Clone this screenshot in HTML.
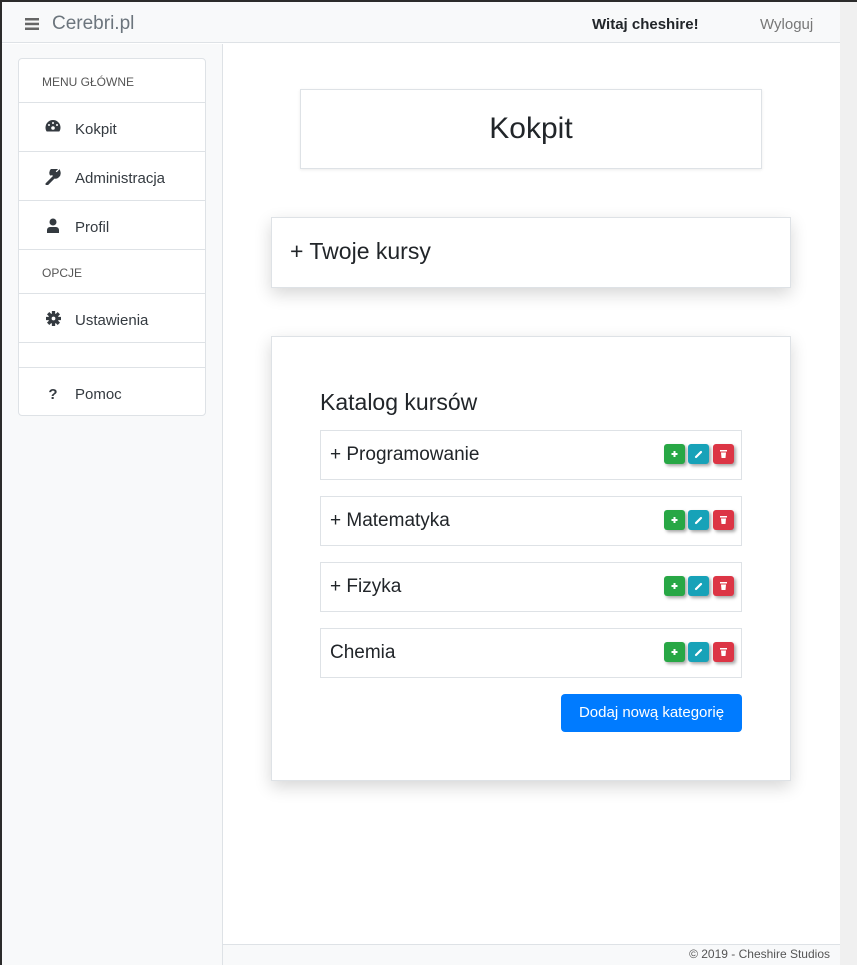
<!DOCTYPE html>
<html><head><meta charset="utf-8"><style>
*{box-sizing:border-box;margin:0;padding:0}
body{width:857px;height:965px;overflow:hidden;font-family:"Liberation Sans",sans-serif;background:#fff;position:relative;color:#212529}
.frame{position:absolute;left:0;top:0;width:857px;height:965px;border-left:2px solid #2b2b2b;border-top:2px solid #2b2b2b;pointer-events:none}
.nav{position:absolute;left:2px;top:2px;width:838px;height:41px;background:#f8f9fa;border-bottom:1px solid #dee2e6}
.brand{position:absolute;top:11px;font-size:19px;color:#6c757d}
.witaj{position:absolute;left:590px;top:14px;font-size:15px;font-weight:bold;color:#212529}
.wyl{position:absolute;left:758px;top:14px;font-size:15px;color:#777}
.side{position:absolute;left:2px;top:44px;width:221px;height:921px;background:#f8f9fa;border-right:1px solid #dee2e6}
.scroll{position:absolute;left:840px;top:2px;width:17px;height:963px;background:#f0f0f0}
.card{position:absolute;left:18px;top:58px;width:188px;height:358px;background:#fff;border:1px solid #dee2e6;border-radius:4px}
.row{position:absolute;left:0;width:186px;border-top:1px solid #dee2e6;font-size:15px;color:#343a40}
.row .t{position:absolute;left:56px}
.row .ic{position:absolute;left:26px;width:16px;text-align:center;font-weight:bold;color:#343a40}
.hd{font-size:12px;color:#555}
.hd .t{left:23px}
.main{position:absolute;background:#fff;border:1px solid #dee2e6}
.sh{box-shadow:0 6px 16px rgba(0,0,0,.16)}
.item{position:absolute;left:48px;width:422px;height:50px;border:1px solid #dee2e6;font-size:19px}
.item span{position:absolute;left:9px;top:13px}
.b{position:absolute;top:13px;width:21px;height:20px;border-radius:3px;box-shadow:2px 2px 3px rgba(0,0,0,.35)}
.b svg{position:absolute;left:5px;top:5px}
.foot{position:absolute;left:223px;top:944px;width:617px;height:21px;background:#f8f9fa;border-top:1px solid #dee2e6;font-size:12px;color:#555;text-align:right;padding-right:10px;line-height:19px}
</style></head><body>
<div class="nav"><svg style="position:absolute;left:23px;top:16px" width="14" height="12" viewBox="0 0 14 12"><rect y="0" width="14" height="2.5" fill="#666"/><rect y="4.7" width="14" height="2.5" fill="#666"/><rect y="9.5" width="14" height="2.5" fill="#666"/></svg><div class="brand" style="left:50px">Cerebri.pl</div><div class="witaj">Witaj cheshire!</div><div class="wyl">Wyloguj</div></div>
<div class="side"></div>
<div class="scroll"></div>
<div class="card">
<div class="row hd" style="top:0;height:44px;border-top:none"><span class="t" style="top:16px">MENU GŁÓWNE</span></div>
<div class="row" style="top:43px;height:49px"><span class="ic" style="top:16px"><svg width="16" height="14" viewBox="0 0 16 14"><path d="M8 1A7.5 7.5 0 0 0 .5 8.5c0 1.5.4 3 1.2 4h12.6c.8-1 1.2-2.5 1.2-4A7.5 7.5 0 0 0 8 1z" fill="#343a40"/><circle cx="8" cy="9" r="1.8" fill="#fff"/><circle cx="4" cy="6" r="1" fill="#fff"/><circle cx="8" cy="4" r="1" fill="#fff"/><circle cx="12" cy="6" r="1" fill="#fff"/></svg></span><span class="t" style="top:18px">Kokpit</span></div>
<div class="row" style="top:92px;height:49px"><span class="ic" style="top:17px"><svg width="16" height="16" viewBox="0 0 16 16"><path d="M2 15l7-7M9 8a4 4 0 0 0 5-5l-2 2-2-1-1-2 2-2a4 4 0 0 0-5 5" stroke="#343a40" stroke-width="3" fill="#343a40" stroke-linecap="round"/></svg></span><span class="t" style="top:18px">Administracja</span></div>
<div class="row" style="top:141px;height:49px"><span class="ic" style="top:17px"><svg width="14" height="15" viewBox="0 0 14 15"><circle cx="7" cy="4" r="3.5" fill="#343a40"/><path d="M1 15v-3a3 3 0 0 1 3-3h6a3 3 0 0 1 3 3v3z" fill="#343a40"/></svg></span><span class="t" style="top:18px">Profil</span></div>
<div class="row hd" style="top:190px;height:44px"><span class="t" style="top:16px">OPCJE</span></div>
<div class="row" style="top:234px;height:49px"><span class="ic" style="top:17px"><svg width="15" height="15" viewBox="0 0 16 16"><circle cx="8" cy="8" r="5.5" fill="#343a40"/><path d="M8 0v16M0 8h16M2.3 2.3l11.4 11.4M13.7 2.3L2.3 13.7" stroke="#343a40" stroke-width="3.5"/><circle cx="8" cy="8" r="2" fill="#fff"/></svg></span><span class="t" style="top:18px">Ustawienia</span></div>
<div class="row" style="top:283px;height:25px"></div>
<div class="row" style="top:308px;height:49px"><span class="ic" style="top:18px;font-size:15px">?</span><span class="t" style="top:18px">Pomoc</span></div>
</div>
<div class="main" style="left:300px;top:89px;width:462px;height:80px;box-shadow:0 1px 3px rgba(0,0,0,.08)"><div style="text-align:center;font-size:30px;margin-top:22px">Kokpit</div></div>
<div class="main sh" style="left:271px;top:217px;width:520px;height:71px"><div style="position:absolute;left:18px;top:20px;font-size:23px">+ Twoje kursy</div></div>
<div class="main sh" style="left:271px;top:336px;width:520px;height:445px">
<div style="position:absolute;left:48px;top:52px;font-size:23px">Katalog kursów</div>
<div class="item" style="top:93px"><span>+ Programowanie</span></div>
<div class="item" style="top:159px"><span>+ Matematyka</span></div>
<div class="item" style="top:225px"><span>+ Fizyka</span></div>
<div class="item" style="top:291px"><span>Chemia</span></div>
<div style="position:absolute;left:289px;top:357px;width:181px;height:38px;background:#007bff;border-radius:4px;color:#fff;font-size:15px;text-align:center;line-height:38px">Dodaj nową kategorię</div>
</div>
<div id="btns"></div>
<div class="foot">© 2019 - Cheshire Studios</div>
<div class="frame"></div>
<div style="position:absolute;left:0;top:0">
<div style="position:absolute;left:664px;top:444px"><i class="b" style="left:0;top:0;background:#28a745"><svg width="11" height="10" viewBox="0 0 11 10"><path d="M5.5 2v6M2.5 5h6" stroke="#fff" stroke-width="2"/></svg></i><i class="b" style="left:24px;top:0;background:#17a2b8"><svg width="11" height="10" viewBox="0 0 11 10"><path d="M3 8l5-5" stroke="#fff" stroke-width="2.2" stroke-linecap="round"/></svg></i><i class="b" style="left:49px;top:0;background:#dc3545"><svg width="11" height="10" viewBox="0 0 11 10"><rect x="2" y="1" width="7" height="1.5" fill="#fff"/><path d="M3 3.5h5l-.5 5.5h-4z" fill="#fff"/></svg></i></div>
<div style="position:absolute;left:664px;top:510px"><i class="b" style="left:0;top:0;background:#28a745"><svg width="11" height="10" viewBox="0 0 11 10"><path d="M5.5 2v6M2.5 5h6" stroke="#fff" stroke-width="2"/></svg></i><i class="b" style="left:24px;top:0;background:#17a2b8"><svg width="11" height="10" viewBox="0 0 11 10"><path d="M3 8l5-5" stroke="#fff" stroke-width="2.2" stroke-linecap="round"/></svg></i><i class="b" style="left:49px;top:0;background:#dc3545"><svg width="11" height="10" viewBox="0 0 11 10"><rect x="2" y="1" width="7" height="1.5" fill="#fff"/><path d="M3 3.5h5l-.5 5.5h-4z" fill="#fff"/></svg></i></div>
<div style="position:absolute;left:664px;top:576px"><i class="b" style="left:0;top:0;background:#28a745"><svg width="11" height="10" viewBox="0 0 11 10"><path d="M5.5 2v6M2.5 5h6" stroke="#fff" stroke-width="2"/></svg></i><i class="b" style="left:24px;top:0;background:#17a2b8"><svg width="11" height="10" viewBox="0 0 11 10"><path d="M3 8l5-5" stroke="#fff" stroke-width="2.2" stroke-linecap="round"/></svg></i><i class="b" style="left:49px;top:0;background:#dc3545"><svg width="11" height="10" viewBox="0 0 11 10"><rect x="2" y="1" width="7" height="1.5" fill="#fff"/><path d="M3 3.5h5l-.5 5.5h-4z" fill="#fff"/></svg></i></div>
<div style="position:absolute;left:664px;top:642px"><i class="b" style="left:0;top:0;background:#28a745"><svg width="11" height="10" viewBox="0 0 11 10"><path d="M5.5 2v6M2.5 5h6" stroke="#fff" stroke-width="2"/></svg></i><i class="b" style="left:24px;top:0;background:#17a2b8"><svg width="11" height="10" viewBox="0 0 11 10"><path d="M3 8l5-5" stroke="#fff" stroke-width="2.2" stroke-linecap="round"/></svg></i><i class="b" style="left:49px;top:0;background:#dc3545"><svg width="11" height="10" viewBox="0 0 11 10"><rect x="2" y="1" width="7" height="1.5" fill="#fff"/><path d="M3 3.5h5l-.5 5.5h-4z" fill="#fff"/></svg></i></div>
</div>
</body></html>
